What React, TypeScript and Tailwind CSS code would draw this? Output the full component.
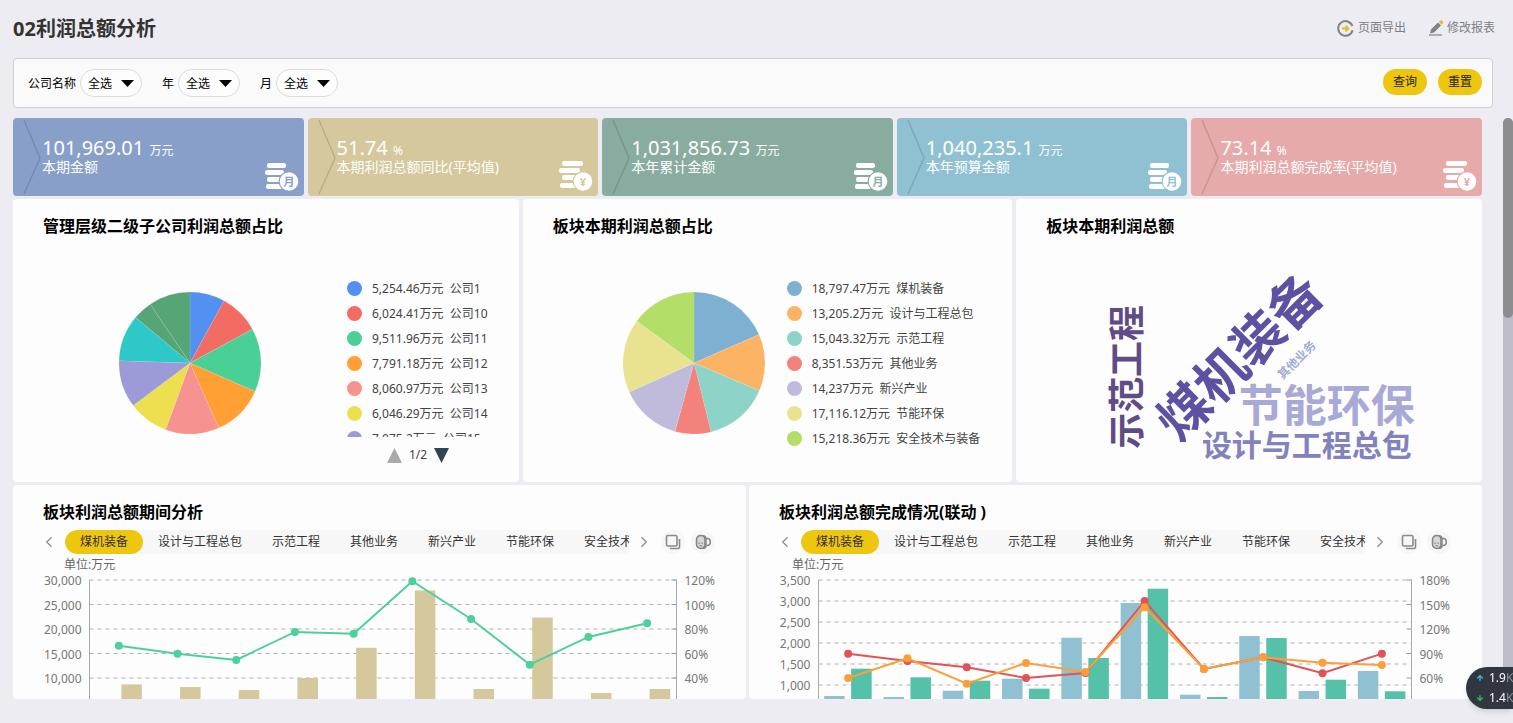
import { useState } from 'react'
import { ArrowDown, ArrowUp, ChevronLeft, ChevronRight } from 'lucide-react'
import { clsx } from 'clsx'

type Slice = { value: number; label?: string; name?: string; color: string }
type Series = { color: string; values: number[] }

const KPIS = [
  { value: '101,969.01', unit: '万元', label: '本期金额', bg: 'bg-[#889fca]', ink: '#889fca', mark: '月' },
  { value: '51.74', unit: '%', label: '本期利润总额同比(平均值)', bg: 'bg-[#d4c89c]', ink: '#d4c89c', mark: '¥' },
  { value: '1,031,856.73', unit: '万元', label: '本年累计金额', bg: 'bg-[#88ada0]', ink: '#88ada0', mark: '月' },
  { value: '1,040,235.1', unit: '万元', label: '本年预算金额', bg: 'bg-[#90c1d3]', ink: '#90c1d3', mark: '月' },
  { value: '73.14', unit: '%', label: '本期利润总额完成率(平均值)', bg: 'bg-[#e6aaaa]', ink: '#e6aaaa', mark: '¥' },
]

const COMPANIES: Slice[] = [
  { value: 5254.46, label: '5,254.46万元', name: '公司1', color: '#5290f1' },
  { value: 6024.41, label: '6,024.41万元', name: '公司10', color: '#f26c63' },
  { value: 9511.96, label: '9,511.96万元', name: '公司11', color: '#4ad096' },
  { value: 7791.18, label: '7,791.18万元', name: '公司12', color: '#ff9f34' },
  { value: 8060.97, label: '8,060.97万元', name: '公司13', color: '#f69390' },
  { value: 6046.29, label: '6,046.29万元', name: '公司14', color: '#eedf4e' },
  { value: 7075.2, label: '7,075.2万元', name: '公司15', color: '#9c9bd7' },
  { value: 6990, color: '#2ec8c9' },
  { value: 2910, color: '#56a576' },
  { value: 6240, color: '#56a576' },
]

const SECTORS: Slice[] = [
  { value: 18797.47, label: '18,797.47万元', name: '煤机装备', color: '#7eb0d2' },
  { value: 13205.2, label: '13,205.2万元', name: '设计与工程总包', color: '#fcb363' },
  { value: 15043.32, label: '15,043.32万元', name: '示范工程', color: '#8ed3c8' },
  { value: 8351.53, label: '8,351.53万元', name: '其他业务', color: '#f2827b' },
  { value: 14237, label: '14,237万元', name: '新兴产业', color: '#c0badb' },
  { value: 17116.12, label: '17,116.12万元', name: '节能环保', color: '#e9e391' },
  { value: 15218.36, label: '15,218.36万元', name: '安全技术与装备', color: '#b3de68' },
]

const TABS = ['煤机装备', '设计与工程总包', '示范工程', '其他业务', '新兴产业', '节能环保', '安全技术与装备']

function ExportIcon() {
  return (
    <svg width="17" height="17" viewBox="0 0 17 17" fill="none">
      <path d="M15.4 6A7.3 7.3 0 1 0 15.6 10.2" stroke="#7f8287" strokeWidth="2" />
      <path d="M5 8.5h6M8.5 5.8l2.8 2.7-2.8 2.7" stroke="#e6bd1c" strokeWidth="1.9" />
    </svg>
  )
}

function EditIcon() {
  return (
    <svg width="16" height="16" viewBox="0 0 16 16">
      <path d="M1 15h13" stroke="#7f8287" strokeWidth="1.2" />
      <path d="M2 13.5l1-4 7-7 3 3-7 7z" fill="#7f8287" />
      <path d="M10.8 1.8L12.4.4a1 1 0 0 1 1.3 0l1.4 1.4a1 1 0 0 1 0 1.3l-1.4 1.6z" fill="#e6bd1c" />
    </svg>
  )
}

function CoinsIcon({ ink, mark }: { ink: string; mark: string }) {
  // The yen variant is stacked a little higher than the month one
  const yen = mark === '¥'
  return (
    <svg width="34" height="32" viewBox="0 0 34 32" fill="#fff">
      <rect x={yen ? 3 : 2} y={yen ? 1 : 3} width={yen ? 21 : 19} height="5" rx="2" />
      <rect x="0" y={yen ? 8 : 10} width={yen ? 21 : 19} height="5" rx="2" />
      <rect x={yen ? 3 : 2} y={yen ? 15 : 17} width="18" height="5" rx="2" />
      <rect x="1" y={yen ? 23 : 24} width="18" height="5" rx="2" />
      <circle cx="24" cy="21.5" r="10.4" fill={ink} />
      <circle cx="24" cy="21.5" r="9.3" />
      <text x="24" y="25.5" fontSize="11" fontWeight="700" textAnchor="middle" fill={ink}>
        {mark}
      </text>
    </svg>
  )
}

function KpiCard({ kpi }: { kpi: (typeof KPIS)[number] }) {
  return (
    <section className={clsx('flex h-[78px] rounded text-white', kpi.bg)}>
      <svg className="ml-2.5 h-full w-[19px] shrink-0" viewBox="0 0 19 78" fill="none">
        <path d="M1 2l16 38L1 76" stroke="#000" strokeOpacity="0.14" strokeWidth="1.4" />
      </svg>
      <div className="flex-1 pt-[19px] whitespace-nowrap">
        <p className="text-xl leading-[22px]">
          {kpi.value} <span className="text-xs">{kpi.unit}</span>
        </p>
        <p className="text-sm leading-4">{kpi.label}</p>
      </div>
      <div className="mr-[5px] mb-1 self-end">
        <CoinsIcon ink={kpi.ink} mark={kpi.mark} />
      </div>
    </section>
  )
}

function FilterSelect({ id, label }: { id: string; label: string }) {
  return (
    <div className="flex items-center gap-1">
      <label htmlFor={id} className="pt-0.5">{label}</label>
      <div className="flex h-7 items-center gap-2 rounded-full border border-[#dcdcdf] bg-[#fdfdfd] px-[7px]">
        <select id={id} className="w-[25px] appearance-none bg-transparent pt-0.5 text-black outline-none">
          <option>全选</option>
        </select>
        <svg width="13" height="7" viewBox="0 0 13 7">
          <path d="M0 0h13L6.5 7z" />
        </svg>
      </div>
    </div>
  )
}

function Pie({ data }: { data: Slice[] }) {
  const total = data.reduce((sum, d) => sum + d.value, 0)
  let acc = 0
  const at = (v: number) => {
    const a = (v / total) * Math.PI * 2
    return `${71 + 71 * Math.sin(a)} ${71 - 71 * Math.cos(a)}`
  }
  return (
    <svg className="mt-1 shrink-0" width="142" height="142" viewBox="0 0 142 142">
      {data.map((d, i) => {
        const from = at(acc)
        acc += d.value
        return (
          <path
            key={i}
            d={`M71 71L${from}A71 71 0 0 1 ${at(acc)}Z`}
            fill={d.color}
            stroke="#fff"
            strokeOpacity="0.2"
            strokeWidth="0.5"
          />
        )
      })}
    </svg>
  )
}

function Legend({ data }: { data: Slice[] }) {
  return (
    <ul className="text-xs text-[#444]">
      {data.map((d) => (
        <li key={d.name} className="flex h-[25px] items-center gap-2.5 whitespace-pre">
          <svg width="15" height="15" viewBox="0 0 15 15">
            <circle cx="7.5" cy="7.5" r="7.5" fill={d.color} />
          </svg>
          {`${d.label}  ${d.name}`}
        </li>
      ))}
    </ul>
  )
}

function Card({ title, children }: { title: string; children: React.ReactNode }) {
  return (
    <section className="min-w-0 rounded-sm bg-[#fdfdfd]">
      <h2 className="pt-[15px] pl-[30px] text-base leading-6 font-bold text-black">{title}</h2>
      {children}
    </section>
  )
}

function WordCloud() {
  return (
    <svg className="mt-px w-full" viewBox="0 0 466 243" fontWeight="700" textAnchor="middle">
      <text transform="translate(124 138) rotate(-90)" fontSize="36" fill="#5f4b85">示范工程</text>
      <text transform="translate(237 131) rotate(-45)" fontSize="52" fill="#5e50a2">煤机装备</text>
      <text transform="translate(284 124) rotate(-45)" fontSize="12" fill="#a3abd8">其他业务</text>
      <text x="311" y="183" fontSize="44" fill="#a9a9d8">节能环保</text>
      <text x="291" y="217" fontSize="30" fill="#8382bd">设计与工程总包</text>
    </svg>
  )
}

function TabStrip() {
  const [active, setActive] = useState(TABS[0])
  return (
    <div className="mt-1.5 mr-[31px] ml-[27px] flex items-center text-xs text-[#333]">
      <button aria-label="上一页" className="mr-[7px] flex text-[#888]">
        <ChevronLeft size={18} strokeWidth={1.5} />
      </button>
      <div className="flex h-6 flex-1 overflow-hidden rounded-l-full bg-[#f7f7f7]">
        {TABS.map((tab) => (
          <button
            key={tab}
            onClick={() => setActive(tab)}
            className={clsx('shrink-0 rounded-full px-[15px]', tab === active && 'bg-[#efc60f]')}
          >
            {tab}
          </button>
        ))}
      </div>
      <button aria-label="下一页" className="ml-1.5 flex text-[#888]">
        <ChevronRight size={18} strokeWidth={1.5} />
      </button>
      <button aria-label="放大" className="ml-2 flex size-6 items-center justify-center rounded-full bg-[#f7f7f7]">
        <svg width="16" height="16" viewBox="0 0 16 16" fill="none" stroke="#8a8a8a">
          <rect x="1.5" y="1.5" width="10.5" height="10.5" rx="1.5" strokeWidth="1.6" />
          <path d="M14.5 5v8a1.5 1.5 0 0 1-1.5 1.5H5" strokeWidth="1.6" />
        </svg>
      </button>
      <button aria-label="切换图表" className="ml-1.5 flex size-6 items-center justify-center rounded-full bg-[#f7f7f7]">
        <svg width="16" height="16" viewBox="0 0 16 16" fill="none" stroke="#858585" strokeWidth="1.5">
          <rect x="1.5" y="1.5" width="8.5" height="13" rx="4.2" fill="#d6d6d6" />
          <path d="M7.5 1.8c2.5 0 3.5 1 3.5 3.2v6.5c0 2-1 3-3.5 3M11 4.5h1.2a3 3 0 0 1 3 3v1a3 3 0 0 1-3 3H11" />
          <path d="M3.5 9.3h1.6M6.4 9.3H8M4.4 11.7h2.8" strokeWidth="1.1" />
        </svg>
      </button>
    </div>
  )
}

type ComboProps = {
  left: number
  right: number
  unitX: number
  yMax: number
  yStep: number
  rowHeight: number
  rows: number
  pctMax: number
  pctStep: number
  bars: Series[]
  barOffsets: number[]
  lines: Series[]
}

const TOP = 26
const BOTTOM = 145
const PCT_ROW = 24.5

function ComboChart(p: ComboProps) {
  const band = (p.right - p.left) / 10
  const cx = (i: number) => p.left + band * (i + 0.5)
  const barY = (v: number) => TOP + ((p.yMax - v) / p.yStep) * p.rowHeight
  const pctY = (v: number) => TOP + ((p.pctMax - v) / p.pctStep) * PCT_ROW

  return (
    <svg className="block w-full" viewBox="0 0 733 145" fontSize="12" fill="#777">
      <text x={p.unitX} y="15" fill="#666">单位:万元</text>
      {Array.from({ length: p.rows }, (_, i) => {
        const y = TOP + i * p.rowHeight
        return (
          <g key={i}>
            <line x1={p.left} x2={p.right} y1={y} y2={y} stroke="#b0b0b0" strokeDasharray="4 4" />
            <text x={p.left - 8} y={y + 5} textAnchor="end">
              {(p.yMax - i * p.yStep).toLocaleString('en-US')}
            </text>
          </g>
        )
      })}
      {Array.from({ length: 5 }, (_, i) => {
        const y = TOP + i * PCT_ROW
        return (
          <g key={i}>
            <line x1={p.right - 5} x2={p.right} y1={y} y2={y} stroke="#999" />
            <text x={p.right + 8} y={y + 5}>{`${p.pctMax - i * p.pctStep}%`}</text>
          </g>
        )
      })}
      <path d={`M${p.left} ${TOP}V${BOTTOM}M${p.right} ${TOP}V${BOTTOM}`} stroke="#aaa" />
      {p.bars.map((s, n) =>
        s.values.map((v, i) => (
          <rect
            key={`${n}-${i}`}
            x={cx(i) + p.barOffsets[n]}
            y={barY(v)}
            width="20.5"
            height={BOTTOM - barY(v)}
            fill={s.color}
          />
        )),
      )}
      {p.lines.map((s) => (
        <g key={s.color} fill={s.color}>
          <polyline
            points={s.values.map((v, i) => `${cx(i)},${pctY(v)}`).join(' ')}
            fill="none"
            stroke={s.color}
            strokeWidth="2"
          />
          {s.values.map((v, i) => (
            <circle key={i} cx={cx(i)} cy={pctY(v)} r="4" />
          ))}
        </g>
      ))}
    </svg>
  )
}

export default function App() {
  return (
    <div className="flex min-h-screen flex-col bg-[#edecf2] pl-[13px] font-['Noto_Sans','Noto_Sans_CJK_SC',sans-serif] text-xs text-[#222]">
      <header className="flex h-[58px] items-center justify-between pr-[18px]">
        <h1 className="text-xl font-bold text-[#333]">02利润总额分析</h1>
        <nav className="mb-0.5 flex gap-[22px] text-[#7c8187]">
          <a href="#export" className="flex items-center gap-1">
            <ExportIcon />
            页面导出
          </a>
          <a href="#edit" className="flex items-center gap-[3px]">
            <EditIcon />
            修改报表
          </a>
        </nav>
      </header>

      <form className="mr-5 flex h-[50px] items-center justify-between rounded-sm border border-[#cfced6] bg-[#fafafa] pr-2.5 pl-3.5">
        <div className="flex gap-5 text-black">
          <FilterSelect id="company" label="公司名称" />
          <FilterSelect id="year" label="年" />
          <FilterSelect id="month" label="月" />
        </div>
        <div className="mb-0.5 flex gap-[11px]">
          <button type="button" className="h-[26px] w-11 rounded-full bg-[#efc60f]">查询</button>
          <button type="reset" className="h-[26px] w-11 rounded-full bg-[#efc60f]">重置</button>
        </div>
      </form>

      <div className="mt-2.5 mb-6 flex flex-1 justify-between">
        <main className="mr-[21px] flex min-w-0 flex-1 flex-col gap-[3px]">
          <div className="grid grid-cols-5 gap-1">
            {KPIS.map((kpi) => (
              <KpiCard key={kpi.label} kpi={kpi} />
            ))}
          </div>

          <div className="grid h-[283px] grid-cols-[506fr_490fr_466fr] gap-1">
            <Card title="管理层级二级子公司利润总额占比">
              <div className="mt-[38px] flex gap-[86px] pl-[106px]">
                <div className="mt-3">
                  <Pie data={COMPANIES} />
                </div>
                <div>
                  <div className="h-[161px] overflow-hidden">
                    <Legend data={COMPANIES.slice(0, 7)} />
                  </div>
                  <div className="mt-2.5 ml-10 flex items-center gap-[7px] text-[#444]">
                    <button aria-label="上翻">
                      <svg width="15" height="15" viewBox="0 0 15 15" fill="#aaa">
                        <path d="M7.5 0L15 15H0z" />
                      </svg>
                    </button>
                    1/2
                    <button aria-label="下翻">
                      <svg width="15" height="15" viewBox="0 0 15 15" fill="#2f4554">
                        <path d="M0 0h15L7.5 15z" />
                      </svg>
                    </button>
                  </div>
                </div>
              </div>
            </Card>
            <Card title="板块本期利润总额占比">
              <div className="mt-[38px] flex gap-[22px] pl-[100px]">
                <div className="mt-3">
                  <Pie data={SECTORS} />
                </div>
                <Legend data={SECTORS} />
              </div>
            </Card>
            <Card title="板块本期利润总额">
              <WordCloud />
            </Card>
          </div>

          <div className="grid flex-1 grid-cols-2 gap-[3px] overflow-hidden">
            <Card title="板块利润总额期间分析">
              <TabStrip />
              <ComboChart
                left={76.5}
                right={663.5}
                unitX={51}
                yMax={30000}
                yStep={5000}
                rowHeight={24.5}
                rows={5}
                pctMax={120}
                pctStep={20}
                barOffsets={[2.5]}
                bars={[
                  { color: '#d4c89c', values: [8700, 8160, 7550, 10000, 16160, 27860, 7750, 22330, 6940, 7750] },
                ]}
                lines={[
                  { color: '#4dd09c', values: [66.4, 59.8, 54.7, 77.6, 76.2, 119, 88.2, 50.9, 73.5, 84.7] },
                ]}
              />
            </Card>
            <Card title="板块利润总额完成情况(联动 )">
              <TabStrip />
              <ComboChart
                left={69.5}
                right={662.5}
                unitX={43}
                yMax={3500}
                yStep={500}
                rowHeight={21}
                rows={6}
                pctMax={180}
                pctStep={30}
                barOffsets={[-24, 3]}
                bars={[
                  { color: '#90c1d3', values: [738, 714, 864, 1150, 2126, 2952, 769, 2167, 857, 1333] },
                  { color: '#55c1a9', values: [1388, 1183, 1102, 912, 1643, 3293, 714, 2119, 1126, 850] },
                ]}
                lines={[
                  { color: '#e15456', values: [89.8, 80.8, 73.1, 60, 66.1, 154.3, 71, 85.3, 65.8, 89.8] },
                  { color: '#fd9f38', values: [60, 84.1, 53, 78.4, 67.3, 146.6, 71, 85.3, 78.7, 75.9] },
                ]}
              />
            </Card>
          </div>
        </main>

        {/* Scroll track */}
        <div className="w-2.5 shrink-0 rounded-full bg-[#bebdc5]">
          <div className="h-[200px] rounded-full bg-[#8d8d8f]" />
        </div>
      </div>

      {/* Network speed badge */}
      <div className="fixed right-0 bottom-3.5 flex h-[42px] w-[47px] flex-col justify-between overflow-hidden rounded-l-full bg-[#32363f] py-px pl-2.5 text-white shadow-md">
        <div className="flex items-center gap-[5px] leading-5">
          <ArrowUp className="shrink-0" size={8} strokeWidth={4} color="#45b5e8" />
          <span className="whitespace-nowrap">
            1.9<span className="text-[#8d9097]">K</span>
          </span>
        </div>
        <div className="flex items-center gap-[5px] leading-5">
          <ArrowDown className="shrink-0" size={8} strokeWidth={4} color="#2fbf55" />
          <span className="whitespace-nowrap">
            1.4<span className="text-[#8d9097]">K</span>
          </span>
        </div>
      </div>
    </div>
  )
}
